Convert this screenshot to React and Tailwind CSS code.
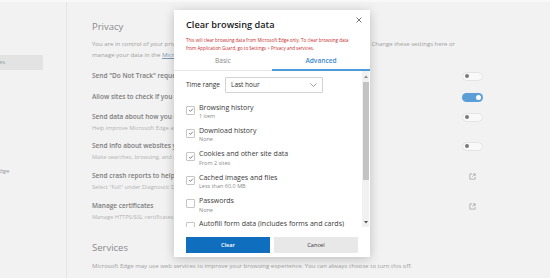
import React from "react";

function Toggle({ on }) {
  return on ? (
    <div className="w-[21px] h-[9px] rounded-full bg-[#5c9fd7] flex items-center justify-end pr-[2px]">
      <div className="w-[5px] h-[5px] rounded-full bg-white" />
    </div>
  ) : (
    <div className="w-[21px] h-[9px] rounded-full bg-[#f9f9f9] border border-[#e4e4e4] flex items-center pl-[2px]">
      <div className="w-[4px] h-[4px] rounded-full bg-[#7a7a7a]" />
    </div>
  );
}

function LinkIcon() {
  return (
    <svg width="7" height="7" viewBox="0 0 8 8" fill="none" stroke="#9a9a9a" strokeWidth="0.8">
      <path d="M3.5 1H1v6h6V4.5" />
      <path d="M4.5 1H7v2.5M7 1L3.8 4.2" />
    </svg>
  );
}

function Row({ title, sub, right, className }) {
  return (
    <div className={"flex justify-between items-start " + className}>
      <div className="flex flex-col">
        <div className="text-[6.5px] leading-[12px] font-semibold text-[#7c7c7c] whitespace-nowrap">{title}</div>
        {sub && <div className="text-[5.7px] leading-[11px] text-[#b2b2b2] whitespace-nowrap">{sub}</div>}
      </div>
      <div className="w-[21px] h-[12px] flex items-center justify-center shrink-0">{right}</div>
    </div>
  );
}

function Check({ checked }) {
  return (
    <div className="w-[9px] h-[9px] border border-[#c6c6c6] rounded-[1px] bg-white flex items-center justify-center shrink-0 mt-[3px]">
      {checked && (
        <svg width="6" height="6" viewBox="0 0 10 10" fill="none" stroke="#4a4a4a" strokeWidth="1.2">
          <path d="M2 5.3L4 7.3L8.2 2.8" />
        </svg>
      )}
    </div>
  );
}

function Item({ title, sub, checked }) {
  return (
    <div className="h-[23.4px] flex items-start gap-[4px] shrink-0">
      <Check checked={checked} />
      <div className="flex flex-col">
        <div className="text-[7px] leading-[9.5px] text-[#3a3a3a] whitespace-nowrap">{title}</div>
        <div className="text-[5.5px] leading-[8px] text-[#8a8a8a] whitespace-nowrap">{sub}</div>
      </div>
    </div>
  );
}

function Dialog() {
  return (
    <div className="absolute left-[174px] top-[10px] w-[196px] h-[247px] bg-white shadow-[0_2px_10px_rgba(0,0,0,0.22)] flex flex-col">
      <div className="relative px-[12px] pt-[9px]">
        <div className="text-[9.2px] leading-[12px] font-semibold text-[#1b1b1b]">Clear browsing data</div>
        <div className="absolute left-[182px] top-[7px]">
          <svg width="6" height="6" viewBox="0 0 6 6" stroke="#555" strokeWidth="0.8">
            <path d="M0.5 0.5L5.5 5.5M5.5 0.5L0.5 5.5" />
          </svg>
        </div>
        <div className="mt-[5px] text-[4.5px] leading-[8px] text-[#c62a2a] whitespace-nowrap">
          <div>This will clear browsing data from Microsoft Edge only. To clear browsing data</div>
          <div>from Application Guard, go to Settings &gt; Privacy and services.</div>
        </div>
      </div>
      <div className="flex h-[19px]">
        <div className="flex-1 border-b border-[#e6e6e6] flex justify-center pt-[4px] text-[6.6px] leading-[10px] text-[#8a8a8a]">Basic</div>
        <div className="flex-1 border-b-2 border-[#4d9bd9] flex justify-center pt-[4px] text-[6.6px] leading-[10px] font-semibold text-[#3b8bd2]">Advanced</div>
      </div>
      <div className="h-[156px] flex">
        <div className="flex-1 pl-[12px] pt-[6px] overflow-hidden flex flex-col">
          <div className="flex items-center h-[16px] shrink-0">
            <div className="w-[39px] text-[6.5px] text-[#2f2f2f]">Time range</div>
            <div className="w-[98px] h-[16px] border border-[#d2d2d2] rounded-[1px] flex items-center justify-between pl-[5px] pr-[5px]">
              <span className="text-[6.5px] text-[#2f2f2f]">Last hour</span>
              <svg width="7" height="4" viewBox="0 0 7 4" fill="none" stroke="#777" strokeWidth="0.7">
                <path d="M0.5 0.5L3.5 3.5L6.5 0.5" />
              </svg>
            </div>
          </div>
          <div className="mt-[9.5px] flex flex-col">
            <Item title="Browsing history" sub="1 item" checked />
            <Item title="Download history" sub="None" checked />
            <Item title="Cookies and other site data" sub="From 2 sites" checked />
            <Item title="Cached images and files" sub="Less than 60.0 MB" checked />
            <Item title="Passwords" sub="None" />
            <Item title="Autofill form data (includes forms and cards)" sub="None" />
          </div>
        </div>
        <div className="w-[7px] mr-[1px] bg-[#f1f1f1] flex flex-col items-center">
          <div className="h-[10px] flex items-center justify-center">
            <svg width="4" height="3" viewBox="0 0 4 3"><path d="M0 3L2 0.5L4 3Z" fill="#8a8a8a" /></svg>
          </div>
          <div className="w-[6px] h-[98px] bg-[#c3c3c3] mt-[1px]" />
          <div className="flex-1" />
          <div className="h-[10px] flex items-center justify-center">
            <svg width="4" height="3" viewBox="0 0 4 3"><path d="M0 0L2 2.5L4 0Z" fill="#505050" /></svg>
          </div>
        </div>
      </div>
      <div className="flex gap-[4px] px-[12px] pt-[10px]">
        <div className="w-[84px] h-[16px] bg-[#106ebe] flex items-center justify-center text-[5.6px] font-semibold text-white">Clear</div>
        <div className="w-[84px] h-[16px] bg-[#e8e8e8] flex items-center justify-center text-[5.6px] text-[#333]">Cancel</div>
      </div>
    </div>
  );
}

export default function App() {
  return (
    <div className="w-[550px] h-[278px] relative overflow-hidden bg-[#f2f2f2] font-['Open_Sans',sans-serif]">
      <div className="h-[2px] bg-[#f8f8f8]" />
      <div className="flex h-[276px]">
        <aside className="w-[67px] shrink-0 border-r border-[#e5e5e5] overflow-hidden">
          <div className="mt-[53px] w-[43px] h-[15px] bg-[#e3e3e3] flex items-center overflow-hidden">
            <span className="-ml-[1px] text-[6px] text-[#9a9a9a] whitespace-nowrap">es</span>
          </div>
          <div className="mt-[96px] h-[10px] flex items-center overflow-hidden">
            <span className="-ml-[1px] text-[6px] text-[#9a9a9a] whitespace-nowrap">dge</span>
          </div>
        </aside>
        <main className="w-[416px] pl-[25px] pt-[18px] flex flex-col">
          <div className="text-[9.5px] leading-[14px] text-[#8a8a8a]">Privacy</div>
          <div className="mt-[5px] text-[6px] leading-[11px] text-[#a0a0a0] whitespace-nowrap">
            <div>You are in control of your privacy and the data Microsoft Edge collects. We use it for all our services. Change these settings here or</div>
            <div>
              manage your data in the <span className="underline text-[#7d9bb5]">Microsoft privacy dashboard</span>.
            </div>
          </div>
          <Row className="mt-[9px]" title={'Send "Do Not Track" requests'} right={<Toggle />} />
          <Row className="mt-[9px]" title="Allow sites to check if you have payment methods saved" right={<Toggle on />} />
          <Row className="mt-[8px]" title="Send data about how you use the browser" sub="Help improve Microsoft Edge and other products" right={<Toggle />} />
          <Row className="mt-[6px]" title="Send info about websites you visit" sub="Make searches, browsing, and other experiences better" right={<Toggle />} />
          <Row className="mt-[7px]" title="Send crash reports to help improve Microsoft Edge" sub={'Select "Full" under Diagnostic Data in Windows settings'} right={<LinkIcon />} />
          <Row className="mt-[7px]" title="Manage certificates" sub="Manage HTTPS/SSL certificates and settings" right={<LinkIcon />} />
          <div className="mt-[18px] text-[9.5px] leading-[14px] text-[#8a8a8a]">Services</div>
          <div className="mt-[6px] text-[6px] leading-[11px] text-[#a0a0a0] whitespace-nowrap">
            Microsoft Edge may use web services to improve your browsing experience. You can always choose to turn this off.
          </div>
        </main>
      </div>
      <Dialog />
    </div>
  );
}
